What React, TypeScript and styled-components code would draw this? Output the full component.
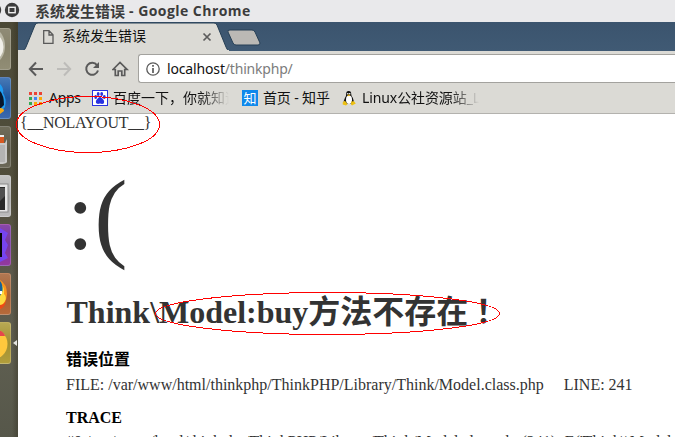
import React from 'react';
import styled, { createGlobalStyle } from 'styled-components';

const ui = '"Noto Sans", "Noto Sans CJK SC", sans-serif';
const serif = '"Liberation Serif", "Noto Sans CJK SC", serif';

const Global = createGlobalStyle`
  * { box-sizing: border-box; }
  html, body { margin: 0; padding: 0; overflow: hidden; background: #fff; }
  svg { display: block; flex: none; }
`;

const Screen = styled.div`
  position: relative;
  width: 675px;
  height: 437px;
  overflow: hidden;
  display: flex;
  flex-direction: column;
`;

const TitleBar = styled.header`
  flex: none;
  height: 22px;
  display: flex;
  align-items: center;
  background: #e9e9eb;
  color: #3c3c3c;
  font: 700 14px/22px "Open Sans", "Noto Sans CJK SC", sans-serif;
`;

const WindowTitle = styled.span`
  display: flex;
  margin-left: 15px;
  white-space: pre;
`;

const TextRun = styled.span<{ $spacing?: number; $size?: number }>`
  letter-spacing: ${(p) => p.$spacing ?? 0}px;
  font-size: ${(p) => (p.$size ? `${p.$size}px` : 'inherit')};
  white-space: pre;
`;

const Desktop = styled.div`
  flex: 1;
  min-height: 0;
  display: flex;
`;

const Launcher = styled.nav`
  flex: none;
  width: 18px;
  background: linear-gradient(90deg, transparent 12px, rgba(40, 35, 20, 0.28) 17px),
    linear-gradient(#4b4936, #514e3c 40%, #5b584a 60%, #5e5e50 80%, #56574a);
  padding-top: 6px;
  display: flex;
  flex-direction: column;
  gap: 7px;
`;

const LauncherRow = styled.div`
  display: flex;
  align-items: center;
  height: 42px;
  gap: 2px;
`;

const Tile = styled.div<{ $fill: string }>`
  flex: none;
  width: 11px;
  height: 42px;
  overflow: hidden;
  border-radius: 0 3px 3px 0;
  border: 1px solid rgba(255, 255, 255, 0.18);
  border-left: 0;
  background: ${(p) => p.$fill};
`;

const Browser = styled.main`
  flex: 1;
  min-width: 0;
  display: flex;
  flex-direction: column;
  background: #fff;
`;

const TabStrip = styled.div`
  position: relative;
  flex: none;
  height: 29px;
  background: linear-gradient(#3b546e, #405a74);
`;

const TabShape = styled.svg`
  position: absolute;
  left: 0;
  top: 0;
`;

const TabContent = styled.div`
  position: relative;
  display: flex;
  align-items: center;
  height: 29px;
  width: 194px;
  padding-left: 25px;
  color: #111;
  font: 14px/28px ${ui};
`;

const TabTitle = styled.span`
  margin-left: 8px;
  margin-top: -2px;
  flex: 1;
`;

const Toolbar = styled.div`
  flex: none;
  height: 32px;
  display: flex;
  align-items: center;
  background: #dbdad5;
  padding: 3px 0 0 10px;
`;

const NavIcons = styled.div`
  flex: none;
  display: flex;
  gap: 12px;
  width: 110px;
`;

const AddressBar = styled.div`
  flex: 1;
  height: 29px;
  display: flex;
  align-items: center;
  gap: 7px;
  padding-left: 7px;
  border: 1px solid #a3a29e;
  border-right: 0;
  border-radius: 3px 0 0 3px;
  background: #fff;
  color: #111;
  font: 14px/26px ${ui};
`;

const UrlPath = styled.span`
  color: #7c7c7c;
  letter-spacing: -0.2px;
`;

const BookmarkBar = styled.div`
  flex: none;
  height: 31px;
  display: flex;
  align-items: center;
  background: #dbdad5;
  border-bottom: 1px solid #b3b2ae;
  padding-left: 11px;
  color: #111;
  font: 14px/28px ${ui};
`;

const Bookmark = styled.div<{ $width: number; $gap?: number }>`
  flex: none;
  display: flex;
  align-items: center;
  gap: ${(p) => p.$gap ?? 5}px;
  width: ${(p) => p.$width}px;
  white-space: nowrap;
`;

const Label = styled.span<{ $width?: number; $spacing?: number; $fade?: boolean }>`
  width: ${(p) => (p.$width ? `${p.$width}px` : 'auto')};
  overflow: hidden;
  letter-spacing: ${(p) => p.$spacing ?? 0}px;
  mask-image: ${(p) => (p.$fade ? 'linear-gradient(90deg, #000 calc(100% - 28px), transparent)' : 'none')};
`;

const ZhihuMark = styled.span`
  width: 16px;
  height: 16px;
  background: #0f88eb;
  color: #fff;
  font: 13px/15px "Noto Sans CJK SC", sans-serif;
  text-align: center;
`;

const Page = styled.article`
  flex: 1;
  min-height: 0;
  overflow: hidden;
  color: #333;
  font: 16px/18px ${serif};
  white-space: nowrap;
`;

const LayoutTag = styled.div`
  height: 18px;
  padding-left: 2px;
  letter-spacing: -0.26px;
`;

const ErrorBody = styled.section`
  padding: 24px 0 0 48px;
`;

const Face = styled.p`
  margin: 0;
  height: 120px;
  padding-left: 0.5px;
  font-size: 100px;
  line-height: 120px;
`;

const Heading = styled.h1`
  margin: 12px 0 0;
  height: 48px;
  padding-left: 0.5px;
  font-size: 32px;
  line-height: 48px;
`;

const Exclamation = styled.span`
  margin-left: -1px;
  font-family: "Noto Sans CJK TC", sans-serif;
  line-height: 0;
`;

const SubHeading = styled.h3<{ $gap?: number }>`
  margin: ${(p) => p.$gap ?? 12}px 0 0;
  height: 24px;
  color: #000;
  font-size: 16px;
  line-height: 24px;
`;

const Line = styled.p<{ $gap?: number }>`
  margin: ${(p) => p.$gap ?? 0}px 0 0;
  height: 24px;
  line-height: 24px;
  white-space: pre;
`;

const Marks = styled.svg`
  position: absolute;
  inset: 0;
  pointer-events: none;
`;

function WindowButtons() {
  return (
    <svg width="20" height="22" viewBox="0 0 20 22">
      <circle cx="-6" cy="10" r="7.2" fill="#3c3c3c" />
      <circle cx="12" cy="10" r="7.2" fill="#3c3c3c" />
      <rect x="8.8" y="7.3" width="6.4" height="5.4" fill="none" stroke="#eee" strokeWidth="1.4" />
    </svg>
  );
}

function Dock() {
  return (
    <Launcher>
      <LauncherRow>
        <Tile $fill="linear-gradient(#8f8b76, #87836b 45%, #918d75)">
          <svg width="11" height="42"><ellipse cx="-5" cy="17" rx="10" ry="16" fill="#b9b7a5" /><ellipse cx="-5" cy="18" rx="8.5" ry="12" fill="#f1f0e9" /></svg>
        </Tile>
      </LauncherRow>
      <LauncherRow>
        <Tile $fill="linear-gradient(#4779b6, #1c559e 50%, #3d69ad)">
          <svg width="11" height="42"><path d="M0 6Q4 10 3 15Q7 21 5 29L0 35Z" fill="#1f9bf0" /><path d="M0 13Q4 17 4 27L0 31Z" fill="#09172c" /><path d="M0 30Q4 30 4 33L0 36Z" fill="#f7aa14" /></svg>
        </Tile>
      </LauncherRow>
      <LauncherRow>
        <Tile $fill="linear-gradient(#6f6c5a, #5d5a49 60%, #6b6858)">
          <svg width="11" height="42"><path d="M0 8H4V12H0Z" fill="#eee" /><path d="M0 10H4V16H0Z" fill="#d75921" /><path d="M0 16H5L7 12V35Q6 37 0 37Z" fill="#c9c9c7" /><path d="M0 18H5V35H0Z" fill="#b4b4b3" /></svg>
        </Tile>
      </LauncherRow>
      <LauncherRow>
        <Tile $fill="linear-gradient(#c4c4c4, #aaa 55%, #bbb)">
          <svg width="11" height="42"><rect x="-10" y="8" width="18" height="28" fill="#e6e6e6" stroke="#8c8c8c" /><rect x="-10" y="11" width="15" height="23" fill="#292929" /><path d="M0 12H5V20L0 25Z" fill="#505050" /></svg>
        </Tile>
      </LauncherRow>
      <LauncherRow>
        <Tile $fill="linear-gradient(#8747a9, #7637a0 50%, #94389e)">
          <svg width="11" height="42"><path d="M0 3L8 8L5 15L8 20L5 28L8 33L0 37Z" fill="#7644ef" /><path d="M0 8H2V32H0Z" fill="#060606" /></svg>
        </Tile>
      </LauncherRow>
      <LauncherRow>
        <Tile $fill="linear-gradient(#b17852, #a75e30 55%, #b66a3a)">
          <svg width="11" height="42"><path d="M0 6Q7 10 7 20Q6 31 0 35Z" fill="#fb941b" /><path d="M0 9Q5 13 4 20Q7 23 5 27Q3 31 0 31Z" fill="#ffda3f" /><path d="M0 7Q3 10 2.5 17L0 22Z" fill="#17629a" /><path d="M0 17H2V20H0Z" fill="#fff" /><path d="M0 31Q4 31 6 26Q5 34 0 35Z" fill="#ed4b16" /></svg>
        </Tile>
      </LauncherRow>
      <LauncherRow>
        <Tile $fill="linear-gradient(#b8a953, #a18f31 50%, #b29e3b)">
          <svg width="11" height="42"><circle cx="-8" cy="21" r="15.5" fill="#ffc83d" /><path d="M0 7.7Q4 9 5 13H0Z" fill="#e5474c" /></svg>
        </Tile>
        <svg width="5" height="6"><path d="M0 3L4 0V6Z" fill="#e4e4e0" /></svg>
      </LauncherRow>
    </Launcher>
  );
}

function Navigation() {
  return (
    <NavIcons>
      <svg width="16" height="16" fill="none" stroke="#5a5a5a" strokeWidth="2"><path d="M15 8H2M8 1.5L1.8 8L8 14.5" /></svg>
      <svg width="16" height="16" fill="none" stroke="#bdbcb9" strokeWidth="2"><path d="M1 8H14M8 1.5L14.2 8L8 14.5" /></svg>
      <svg width="16" height="16"><path d="M13 4.1A6 6 0 1 0 14 9.5" fill="none" stroke="#5a5a5a" strokeWidth="2" /><path d="M15 1V7H9Z" fill="#5a5a5a" /></svg>
      <svg width="18" height="16" fill="none" stroke="#5a5a5a" strokeWidth="1.7"><path d="M1 8.5L8 1.5L15 8.5H12.7V14.5H9.8V10H6.2V14.5H3.3V8.5Z" /></svg>
    </NavIcons>
  );
}

const appColors = ['#ea4335', '#ea4335', '#ea4335', '#34a853', '#4285f4', '#fbaa05', '#34a853', '#fbaa05', '#fbaa05'];

export default function App() {
  return (
    <Screen>
      <Global />
      <TitleBar>
        <WindowButtons />
        <WindowTitle><TextRun $size={15}>系统发生错误</TextRun><TextRun $spacing={0.45}>{' - Google Chrome'}</TextRun></WindowTitle>
      </TitleBar>
      <Desktop>
        <Dock />
        <Browser>
          <TabStrip>
            <TabShape width="260" height="29">
              <path d="M0 29V28.5H5Q7 28 8 25L17 3Q18 1 20 1H196Q198 1 199 3L208 25Q209 28 211 29Z" fill="#dbdad5" stroke="#263f55" />
              <path d="M0 29H211" stroke="#dbdad5" strokeWidth="2" />
              <path d="M212 8H234Q236 8 237 10L242 21Q242 23 240 23H218Q216 23 215 21L210 10Q209 8 212 8Z" fill="#bbb9b5" stroke="#263f55" />
            </TabShape>
            <TabContent>
              <svg width="11" height="14" fill="none" stroke="#5a5a5a" strokeWidth="1.3"><path d="M.7.7H6L10 4.8V13.3H.7ZM6 .7V5H10" /></svg>
              <TabTitle>系统发生错误</TabTitle>
              <svg width="10" height="10" stroke="#5c5c5c" strokeWidth="1.7"><path d="M1.5 1.5L8.5 8.5M8.5 1.5L1.5 8.5" /></svg>
            </TabContent>
          </TabStrip>
          <Toolbar>
            <Navigation />
            <AddressBar>
              <svg width="14" height="14"><circle cx="7" cy="7" r="6.2" fill="none" stroke="#5a5a5a" strokeWidth="1.3" /><path d="M7 6V11M7 3V4.7" stroke="#5a5a5a" strokeWidth="1.7" /></svg>
              <span><TextRun $spacing={-0.15}>localhost</TextRun><UrlPath>/thinkphp/</UrlPath></span>
            </AddressBar>
          </Toolbar>
          <BookmarkBar>
            <Bookmark $width={63} $gap={7}>
              <svg width="13" height="13">{appColors.map((c, i) => <rect key={i} x={(i % 3) * 5} y={Math.floor(i / 3) * 5} width="3" height="3" fill={c} />)}</svg>
              <Label $spacing={-0.3}>Apps</Label>
            </Bookmark>
            <Bookmark $width={150}>
              <svg width="16" height="16"><rect x=".5" y=".5" width="15" height="15" fill="#fff" stroke="#2932e1" /><g fill="#2932e1"><ellipse cx="3.7" cy="7" rx="1.4" ry="1.9" /><ellipse cx="6.2" cy="4" rx="1.4" ry="2" /><ellipse cx="9.7" cy="4" rx="1.4" ry="2" /><ellipse cx="12.3" cy="7" rx="1.4" ry="1.9" /><path d="M8 6.7Q10 7.5 11.8 10.2Q13 13.7 10 14Q8 13.2 6 14Q3 13.7 4.2 10.3Q6 7.3 8 6.7Z" /></g></svg>
              <Label $width={116} $fade>百度一下，你就知道</Label>
            </Bookmark>
            <Bookmark $width={99}>
              <ZhihuMark>知</ZhihuMark>
              <Label $spacing={-0.15}>首页 - 知乎</Label>
            </Bookmark>
            <Bookmark $width={140} $gap={5}>
              <svg width="16" height="16"><path d="M5.2 4Q5 1 7.7 1T10.2 4Q10.2 6 11.9 8Q13.5 11 12 14H3Q2 11 3.9 8Q5.4 6 5.2 4Z" fill="#111" /><ellipse cx="8" cy="9.8" rx="3" ry="4.2" fill="#fff" /><circle cx="6.8" cy="3.8" r=".8" fill="#fff" /><circle cx="8.7" cy="3.8" r=".8" fill="#fff" /><path d="M6 5L7.8 4.4L9.5 5L7.7 6.2Z" fill="#f2b90d" /><path d="M1.8 12L4 10.7L6.5 14.2L5 15.5L1.7 14.5ZM10.2 11.5L13 11.3L14.8 13.5L11 15.6L10 14.5Z" fill="#edc012" /></svg>
              <Label $width={117} $fade $spacing={-0.1}>Linux公社资源站_Linux</Label>
            </Bookmark>
          </BookmarkBar>
          <Page>
            <LayoutTag>{'{__NOLAYOUT__}'}</LayoutTag>
            <ErrorBody>
              <Face>:(</Face>
              <Heading>Think\Model:buy方法不存在<Exclamation lang="zh-TW">！</Exclamation></Heading>
              <SubHeading>错误位置</SubHeading>
              <Line $gap={1}>{'FILE: /var/www/html/thinkphp/ThinkPHP/Library/Think/Model.class.php \u00a0\u00a0\u00a0\u00a0LINE: 241'}</Line>
              <SubHeading $gap={9}>TRACE</SubHeading>
              <Line>{"#0 /var/www/html/thinkphp/ThinkPHP/Library/Think/Model.class.php(241): E('Think\\\\Model:bu...')"}</Line>
            </ErrorBody>
          </Page>
        </Browser>
      </Desktop>
      <Marks width="675" height="437" fill="none" stroke="#f00" shapeRendering="crispEdges">
        <ellipse cx="88" cy="124.5" rx="71.5" ry="28" />
        <ellipse cx="327.5" cy="313.5" rx="172" ry="21" />
      </Marks>
    </Screen>
  );
}
